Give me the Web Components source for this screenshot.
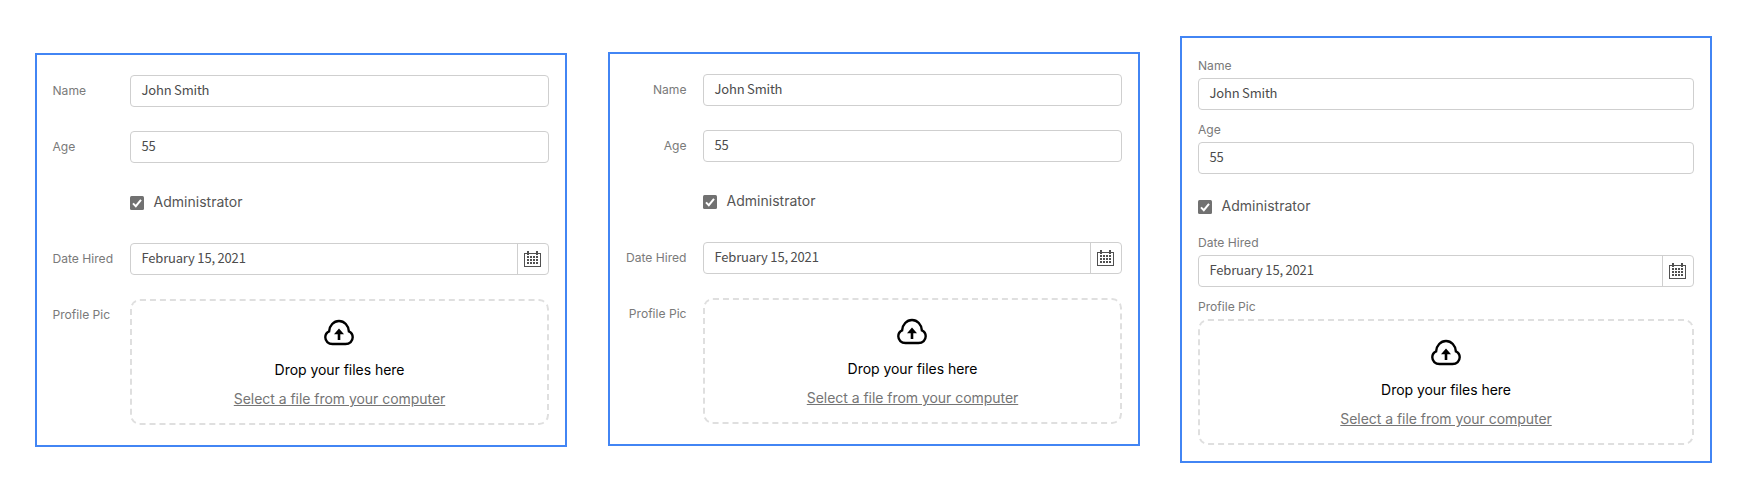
<!DOCTYPE html>
<html lang="en"><head><meta charset="utf-8"><title>Form label positions</title>
<style>
body{margin:0;width:1745px;height:500px;background:#fff;font-family:Inter,sans-serif;display:flex;align-items:flex-start;box-sizing:border-box;padding-left:35px}
#a{margin-top:53px}#b{margin:52px 40px 0 41px}#c{margin-top:36px}
</style></head><body>
<employee-form id="a" layout="left"></employee-form>
<employee-form id="b" layout="right"></employee-form>
<employee-form id="c" layout="top"></employee-form>
<script>
const define=(name,html)=>{
  const t=document.createElement('template');t.innerHTML=html;
  customElements.define(name,class extends HTMLElement{
    constructor(){super();this.attachShadow({mode:'open'}).append(t.content.cloneNode(true));}
  });
};
define('text-box',`<style>
:host{display:flex;box-sizing:border-box;height:32px;border:1px solid #cfcfcf;border-radius:4px;background:#fff}
div{flex:1;padding-left:10.5px;font:13px/28px "Noto Sans CJK SC",sans-serif;letter-spacing:-.19px;color:#4c4c4c}
</style><div><slot></slot></div><slot name="button"></slot>`);
define('calendar-button',`<style>
:host{display:flex;width:30px;border-left:1px solid #cfcfcf;align-items:center;justify-content:center}
svg{display:block;margin-right:2px}
</style><svg width="17" height="16" shape-rendering="crispEdges"><path fill="none" stroke="#505050" d="M.5 2.5h16v13h-16z"/><path fill="#505050" d="M3 0h2v4H3zM12 0h2v4h-2zM3 5h2v2H3zM6 5h2v2H6zM9 5h2v2H9zM12 5h2v2h-2zM3 8h2v2H3zM6 8h2v2H6zM9 8h2v2H9zM12 8h2v2h-2zM3 11h2v2H3zM6 11h2v2H6zM9 11h2v2H9zM12 11h2v2h-2z"/></svg>`);
define('check-box',`<style>
:host{display:flex;height:32px;align-items:center;font-size:14px;letter-spacing:.02px;color:#555}
svg{margin:0 9.5px 0 0}span{line-height:30px;height:32px}
</style><svg width="14" height="14"><rect width="14" height="14" rx="1.5" fill="#717171"/><path d="M3 7.4L5.8 10.2 11 3.8" fill="none" stroke="#fff" stroke-width="2"/></svg><span><slot></slot></span>`);
define('drop-zone',`<style>
:host{display:flex;flex-direction:column;align-items:center;box-sizing:border-box;height:126px;border:2px dashed #dfdfdf;border-radius:10px;padding-top:18px;font-size:14px;letter-spacing:-.04px;line-height:20px;color:#000}
svg{display:block}
.t{margin-top:14px}.s{margin-top:9px;color:#757575;text-decoration:underline}
</style><svg width="31" height="27" viewBox="0 0 31 27"><path d="M8.5 25H21.5C25.8 25 28.7 22 28.7 18.3C28.7 15.6 27.2 13.5 24.9 12.4C24.5 6.6 20.4 2 15 2S5.5 6.6 5.1 12.4C2.8 13.5 1.3 15.6 1.3 18.3C1.3 22 4.2 25 8.5 25Z" fill="none" stroke="#000" stroke-width="2.4"/><path d="M15 9.5l5 5.7h-3.7v5.8h-2.6v-5.8H10z"/></svg>
<div class="t">Drop your files here</div><div class="s">Select a file from your computer</div>`);
define('form-field',`<style>
:host{display:grid;grid-template-columns:78px 419px}
label{font-size:12.1px;line-height:32px;color:#7a7a7a;white-space:nowrap;padding-left:.5px}
:host([layout=right]) label{text-align:right;padding-right:16.5px}
:host([layout=top]){display:block}
:host([layout=top]) label{display:block;line-height:20px;height:22px;padding-left:0}
:host([layout=top]) label.none{display:none}
</style><label><slot name="label"></slot></label><slot></slot>`);
customElements.define('employee-form',class extends HTMLElement{
  constructor(){super();
    const l=this.getAttribute('layout')||'left';
    const field=(label,body,c='')=>`<form-field class="${c}" layout="${l}">${label?`<span slot="label">${label}</span>`:''}${body}</form-field>`;
    this.attachShadow({mode:'open'}).innerHTML=`<style>
:host{display:flex;flex-direction:column;gap:24px;box-sizing:border-box;width:532px;height:394px;border:2px solid #4285f4;padding:20px 16px 20px 15px}
:host([layout=top]){gap:10px;height:427px;padding:18px 16px}
:host([layout=top]) .check{margin:7px 0 0}
</style>`+field('Name','<text-box>John Smith</text-box>')+field('Age','<text-box>55</text-box>')
+field('','<check-box>Administrator</check-box>','check')
+field('Date Hired','<text-box>February 15, 2021<calendar-button slot="button"></calendar-button></text-box>')
+field('Profile Pic','<drop-zone></drop-zone>');
    const c=this.shadowRoot.querySelector('.check');
    if(l==='top')c.shadowRoot.querySelector('label').classList.add('none');
  }
});
</script></body></html>
